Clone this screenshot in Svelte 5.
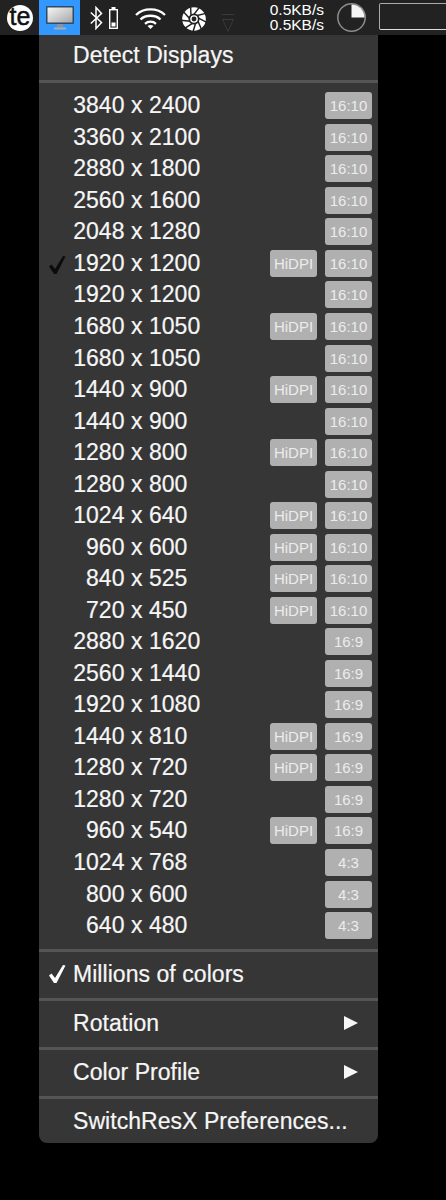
<script>
  const groups = [
    ['3840', '2400', 0, '16:10'], ['3360', '2100', 0, '16:10'], ['2880', '1800', 0, '16:10'],
    ['2560', '1600', 0, '16:10'], ['2048', '1280', 0, '16:10'], ['1920', '1200', 1, '16:10', true],
    ['1920', '1200', 0, '16:10'], ['1680', '1050', 1, '16:10'], ['1680', '1050', 0, '16:10'],
    ['1440', '900', 1, '16:10'], ['1440', '900', 0, '16:10'], ['1280', '800', 1, '16:10'],
    ['1280', '800', 0, '16:10'], ['1024', '640', 1, '16:10'], ['960', '600', 1, '16:10'],
    ['840', '525', 1, '16:10'], ['720', '450', 1, '16:10'], ['2880', '1620', 0, '16:9'],
    ['2560', '1440', 0, '16:9'], ['1920', '1080', 0, '16:9'], ['1440', '810', 1, '16:9'],
    ['1280', '720', 1, '16:9'], ['1280', '720', 0, '16:9'], ['960', '540', 1, '16:9'],
    ['1024', '768', 0, '4:3'], ['800', '600', 0, '4:3'], ['640', '480', 0, '4:3']
  ];
  const checkPath = 'M0 10.500 2.500 8.500 6 13 14 0 16.500 0.500 7.500 18H5Z';
</script>

<div class="screen">
  <header class="bar">
    <div class="te"><span>te</span></div>
    <div class="display-item">
      <svg width="28" height="24" viewBox="0 0 28 24">
        <defs><linearGradient id="scr" x1="0" y1="0" x2="1" y2="1"><stop offset="0" stop-color="#f6f6f6"/><stop offset="1" stop-color="#a6a6a6"/></linearGradient></defs>
        <rect x="0" y="0" width="28" height="18" rx="1" fill="#2d4a66"/>
        <rect x="1.500" y="1.500" width="25" height="15" fill="url(#scr)"/>
        <rect x="11" y="18" width="6" height="3.500" fill="#8b949c"/>
        <rect x="8" y="21.500" width="12" height="2" fill="#a8adb1"/>
      </svg>
    </div>
    <svg class="bt" width="13" height="24" viewBox="0 0 13 24"><path d="M.8 6.500 11.500 16.500 6 22.500V1.500L11.500 7.500.8 17.500" fill="none" stroke="#fff" stroke-width="1.500"/></svg>
    <svg class="batt" width="9" height="22" viewBox="0 0 9 22"><rect x="2.500" y="0" width="4" height="3" fill="#fff"/><rect x=".7" y="2.700" width="7.600" height="18.600" fill="none" stroke="#fff" stroke-width="1.400"/><rect x="2.500" y="15.500" width="4" height="4" fill="#fff"/></svg>
    <svg class="wifi" width="31" height="22" viewBox="0 0 31 22"><g fill="none" stroke="#fff" stroke-width="2.300"><path d="M1 8C8.500 .5 22.500 .5 30 8"/><path d="M5.500 12.500C10.500 7.500 20.500 7.500 25.500 12.500"/><path d="M10 16.800C13 14 18 14 21 16.800"/></g><path d="M12.500 19C14.500 17.800 16.500 17.800 18.500 19L15.500 22Z" fill="#fff"/></svg>
    <svg class="fan" width="26" height="24" viewBox="0 0 26 26">
      <circle cx="13" cy="13" r="12.800" fill="#fff"/>
      <g stroke="#222" stroke-width="1.600">
        {#each [0,40,80,120,160,200,240,280,320] as a}
          <line x1="13" y1="8" x2="19" y2="0" transform="rotate({a} 13 13)"/>
        {/each}
      </g>
      <circle cx="13" cy="13" r="6" fill="#222"/>
      <circle cx="13" cy="13" r="3.400" fill="none" stroke="#fff" stroke-width="1.500"/>
    </svg>
    <svg class="dim" width="12" height="18" viewBox="0 0 12 18"><path d="M.5 5.500H11.500L6 17.500Z" fill="none" stroke="#3a3a3a" stroke-width="1"/><path d="M0 .5H12" stroke="#3a3a3a"/></svg>
    <div class="net"><span>0.5KB/s</span><span>0.5KB/s</span></div>
    <svg class="clock" width="29" height="29" viewBox="0 0 29 29"><circle cx="14.500" cy="14.500" r="13.700" fill="none" stroke="#8c8c8c" stroke-width="1.500"/><path d="M14.500 1.500A13 13 0 0 1 27.500 14.500H14.500Z" fill="#f4f4f4"/></svg>
    <div class="outline"></div>
  </header>

  <nav class="menu">
    <div class="item top">Detect Displays</div>
    <div class="sep"></div>
    <div class="modes">
      {#each groups as [w, h, hidpi, ratio, checked]}
        <div class="mode">
          {#if checked}
            <svg class="check dark" width="17" height="18" viewBox="0 0 17 18"><path d={checkPath} fill="#0c0c0c"/></svg>
          {/if}
          <span class="res"><span class="w">{w}</span> x {h}</span>
          {#if hidpi}<span class="badge hidpi">HiDPI</span>{/if}
          <span class="badge ratio">{ratio}</span>
        </div>
      {/each}
    </div>
    <div class="sep"></div>
    <div class="item">
      <svg class="check light" width="17" height="18" viewBox="0 0 17 18"><path d={checkPath} fill="#fff"/></svg>
      Millions of colors
    </div>
    <div class="sep"></div>
    <div class="item">Rotation<span class="arrow"></span></div>
    <div class="sep"></div>
    <div class="item">Color Profile<span class="arrow"></span></div>
    <div class="sep"></div>
    <div class="item last">SwitchResX Preferences...</div>
  </nav>
</div>

<style>
  :global(body) { margin: 0; background: #000; }
  .screen { width: 446px; height: 1200px; background: #000; overflow: hidden; font-family: "Liberation Sans", Arial, sans-serif; }
  .bar { height: 35px; background: #222; display: flex; align-items: center; white-space: nowrap; overflow: hidden; }
  .te { width: 26px; height: 26px; margin: 1px 0 0 7px; border-radius: 50%; background: #fff; display: flex; align-items: center; justify-content: center; flex: none; }
  .te span { color: #111; font-size: 25px; line-height: 1; -webkit-text-stroke: 0.5px #111; letter-spacing: 0; margin-top: -4px; }
  .display-item { margin-left: 6px; width: 41px; height: 35px; background: #3398fd; display: flex; align-items: center; justify-content: center; flex: none; }
  .bt { margin: 1px 0 0 10px; flex: none; }
  .batt { margin: 1px 0 0 6px; flex: none; }
  .wifi { margin-left: 17px; flex: none; }
  .fan { margin: 2px 0 0 15px; flex: none; }
  .dim { margin: 10px 0 0 15px; flex: none; }
  .net { margin-left: 34px; width: 56px; display: flex; flex-direction: column; align-items: flex-end; color: #fff; font-size: 15.500px; line-height: 14.500px; flex: none; }
  .clock { margin-left: 13px; flex: none; }
  .outline { margin: -2px 0 0 13px; width: 80px; height: 25px; border: 1px solid #aaa; border-bottom-color: #ddd; border-radius: 2px; flex: none; }

  .menu { margin-left: 39px; width: 339px; height: 1108px; background: #363636; border-radius: 0 0 8px 8px; color: #f6f6f6; display: flex; flex-direction: column; font-size: 23px; letter-spacing: 0.05px; -webkit-text-stroke: 0.2px #f6f6f6; }
  .item { height: 46px; box-sizing: border-box; padding: 0 0 0 34px; display: flex; align-items: center; position: relative; flex: none; }
  .item.top { height: 45px; padding-bottom: 4px; }
  .item.last { height: 44px; padding-top: 2px; }
  .sep { height: 3px; background: #555; flex: none; }
  .modes { padding: 7px 0 7.400px; }
  .mode { height: 31.540px; position: relative; display: flex; align-items: center; padding-right: 6px; }
  .res { position: absolute; left: 34px; white-space: nowrap; }
  .w { display: inline-block; width: 51.500px; text-align: right; }
  .badge { height: 27px; width: 47px; box-sizing: border-box; border-radius: 3px; background: #b0b0b0; color: #ececec; font-size: 15px; letter-spacing: 0; -webkit-text-stroke: 0; display: flex; align-items: center; justify-content: center; }
  .ratio { margin-left: auto; }
  .hidpi { position: absolute; right: 61px; }
  .check { position: absolute; left: 9.500px; top: 50%; }
  .check.dark { margin-top: -7.500px; }
  .check.light { margin-top: -10px; }
  .arrow { position: absolute; right: 20px; top: 50%; margin-top: -8px; width: 0; height: 0; border-left: 14px solid #f6f6f6; border-top: 7.500px solid transparent; border-bottom: 7.500px solid transparent; }
</style>
